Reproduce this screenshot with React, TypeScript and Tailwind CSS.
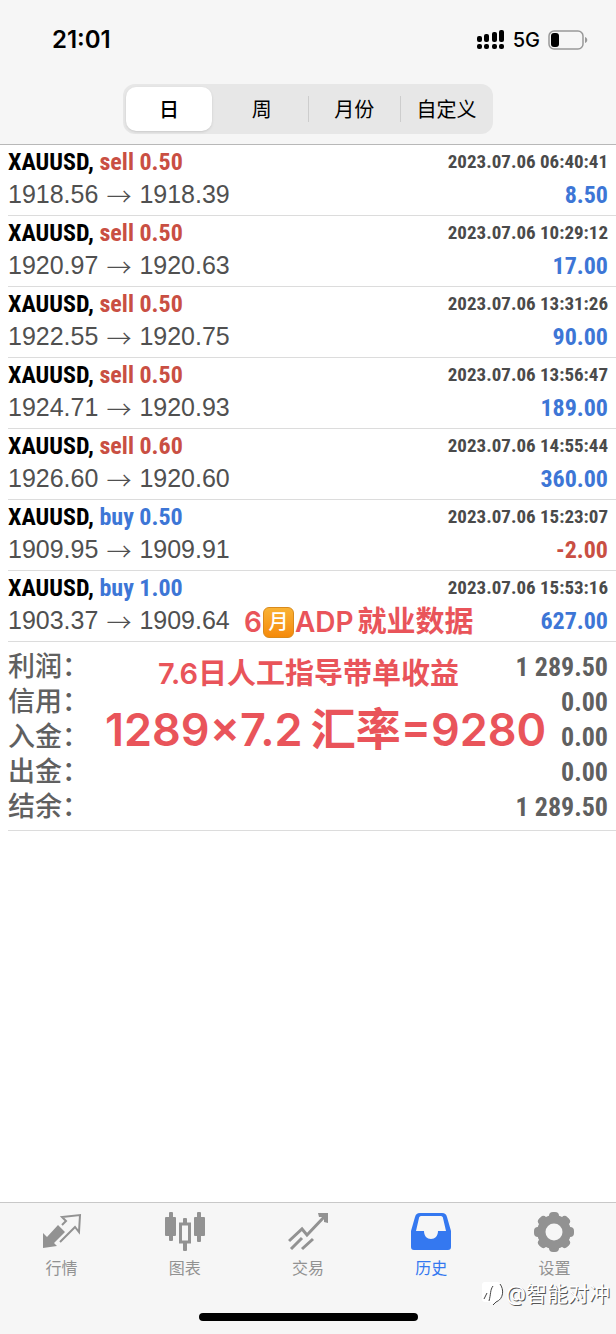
import { useState } from "react";
import clsx from "clsx";

interface Deal {
  side: "sell" | "buy";
  volume: string;
  open: string;
  close: string;
  time: string;
  profit: string;
}

const deals: Deal[] = [
  { side: "sell", volume: "0.50", open: "1918.56", close: "1918.39", time: "2023.07.06 06:40:41", profit: "8.50" },
  { side: "sell", volume: "0.50", open: "1920.97", close: "1920.63", time: "2023.07.06 10:29:12", profit: "17.00" },
  { side: "sell", volume: "0.50", open: "1922.55", close: "1920.75", time: "2023.07.06 13:31:26", profit: "90.00" },
  { side: "sell", volume: "0.50", open: "1924.71", close: "1920.93", time: "2023.07.06 13:56:47", profit: "189.00" },
  { side: "sell", volume: "0.60", open: "1926.60", close: "1920.60", time: "2023.07.06 14:55:44", profit: "360.00" },
  { side: "buy", volume: "0.50", open: "1909.95", close: "1909.91", time: "2023.07.06 15:23:07", profit: "-2.00" },
  { side: "buy", volume: "1.00", open: "1903.37", close: "1909.64", time: "2023.07.06 15:53:16", profit: "627.00" },
];

const summary = [
  { label: "利润", value: "1 289.50" },
  { label: "信用", value: "0.00" },
  { label: "入金", value: "0.00" },
  { label: "出金", value: "0.00" },
  { label: "结余", value: "1 289.50" },
];

const periods = ["日", "周", "月份", "自定义"];

const tabs = [
  { label: "行情", icon: <QuotesIcon /> },
  { label: "图表", icon: <ChartIcon /> },
  { label: "交易", icon: <TradeIcon /> },
  { label: "历史", icon: <HistoryIcon /> },
  { label: "设置", icon: <SettingsIcon /> },
];

function QuotesIcon() {
  return (
    <svg width="40" height="40" viewBox="0 0 40 40" aria-hidden="true">
      <path d="M1 36V21l4 4L16 13l7 7-11 11 3 3z" fill="currentColor" />
      <path
        d="M20 13l4-4-4-4 18-2-1 17-4-5-15 15"
        fill="none"
        stroke="currentColor"
        strokeWidth="2"
      />
    </svg>
  );
}

function ChartIcon() {
  return (
    <svg width="40" height="40" viewBox="0 0 40 40" aria-hidden="true">
      <g fill="currentColor">
        <rect x="4" y="0" width="4" height="29" rx="1" />
        <rect x="0" y="5" width="11" height="19" rx="1" />
        <rect x="32" y="0" width="4" height="30" rx="1" />
        <rect x="29" y="5" width="11" height="19" rx="1" />
        <rect x="18" y="6" width="4" height="6" rx="1" />
        <rect x="18" y="30" width="4" height="9" rx="1" />
      </g>
      <rect x="15.5" y="12" width="9" height="18" fill="none" stroke="currentColor" strokeWidth="3" />
    </svg>
  );
}

function TradeIcon() {
  return (
    <svg width="40" height="40" viewBox="0 0 40 40" aria-hidden="true">
      <g fill="none" stroke="currentColor" strokeWidth="3">
        <path d="M1 29L14 17l5 6L37 4" />
        <path d="M3 37l11-11M14 37l11-10" />
      </g>
      <path d="M30 1h10v10l-4-1V5h-5z" fill="currentColor" />
    </svg>
  );
}

function HistoryIcon() {
  return (
    <svg width="40" height="40" viewBox="0 0 40 40" aria-hidden="true">
      <path
        fillRule="evenodd"
        d="M9 1h22c3 0 4 1 5 4l4 14v16c0 2-1 3-3 3H3c-2 0-3-1-3-3V19L4 5c1-3 2-4 5-4zM10 4c-1 0-2 1-2 2L5 19h8c0 5 3 8 7 8s7-3 7-8h8L32 6c0-1-1-2-2-2z"
        fill="currentColor"
      />
    </svg>
  );
}

function SettingsIcon() {
  return (
    <svg width="40" height="40" viewBox="0 0 40 40" aria-hidden="true">
      <g fill="currentColor">
        <rect x="15" y="0" width="10" height="40" rx="4" />
        <rect x="15" y="0" width="10" height="40" rx="4" transform="rotate(45 20 20)" />
        <rect x="15" y="0" width="10" height="40" rx="4" transform="rotate(90 20 20)" />
        <rect x="15" y="0" width="10" height="40" rx="4" transform="rotate(135 20 20)" />
        <circle cx="20" cy="20" r="17" />
      </g>
      <circle cx="20" cy="20" r="8.5" fill="#f6f6f6" />
    </svg>
  );
}

function StatusBar() {
  return (
    <div className="flex h-20 items-center justify-between pr-7 pl-[52px] text-black">
      <span className="text-2xl font-semibold">21:01</span>
      <div className="flex items-center gap-2">
        <svg width="28" height="20" viewBox="0 0 28 20" aria-hidden="true">
          <rect x="0" y="6" width="5" height="6" rx="2" />
          <rect x="7" y="4" width="5" height="8" rx="2" />
          <rect x="15" y="2" width="5" height="10" rx="2" />
          <rect x="22" y="0" width="5" height="12" rx="2" />
          <rect x="0" y="14" width="5" height="5" rx="2" />
          <rect x="7" y="14" width="5" height="5" rx="2" />
          <rect x="15" y="14" width="5" height="5" rx="2" />
          <rect x="22" y="14" width="5" height="5" rx="2" />
        </svg>
        <span className="text-xl font-medium">5G</span>
        <svg width="40" height="20" viewBox="0 0 40 20" aria-hidden="true">
          <rect x="1" y="1" width="34" height="18" rx="5" fill="none" stroke="#999" strokeWidth="1.5" />
          <rect x="3" y="3" width="8" height="14" rx="3" />
          <path d="M37 7c3 1 3 5 0 6z" fill="#999" />
        </svg>
      </div>
    </div>
  );
}

function DealRow({ deal }: { deal: Deal }) {
  return (
    <li className="flex h-[71px] flex-col border-b border-[#dcdcdc] pr-2">
      <div className="flex h-[34px] items-center justify-between font-['Roboto_Condensed',Roboto,sans-serif] font-bold">
        <span className="text-2xl text-black">
          XAUUSD,{" "}
          <span className={deal.side === "sell" ? "text-[#c94f43]" : "text-[#3d76d6]"}>
            {deal.side} {deal.volume}
          </span>
        </span>
        <time className="text-[19px] text-[#4a4a4a]">{deal.time}</time>
      </div>
      <div className="flex h-8 items-center justify-between">
        <span className="flex items-center gap-2 font-['Liberation_Sans',Arial,sans-serif] text-[25px] text-[#505050]">
          {deal.open}
          <span className="font-['Noto_Sans_CJK_SC',sans-serif] leading-none font-light">→</span>
          {deal.close}
        </span>
        <span
          className={clsx(
            "font-['Roboto_Condensed',Roboto,sans-serif] text-2xl font-bold",
            deal.profit.startsWith("-") ? "text-[#c94f43]" : "text-[#3d76d6]"
          )}
        >
          {deal.profit}
        </span>
      </div>
    </li>
  );
}

// free-floating notes over the list
function Notes() {
  return (
    <div className="font-semibold whitespace-nowrap text-[#e9545a]">
      <p className="absolute -top-10 left-[236px] flex h-10 items-center text-[28px]">
        6
        <span className="mx-px flex size-[31px] items-center justify-center rounded-md border border-[#d98a1c] bg-linear-to-b from-[#f9b233] to-[#f58a07] text-xl font-medium text-white">
          月
        </span>
        <span className="mr-1">ADP</span>
        <span className="text-[29px]">就业数据</span>
      </p>
      <p className="absolute top-3 left-[150px] flex h-10 items-center text-[29px]">7.6日人工指导带单收益</p>
      <p className="absolute top-14 left-[97px] flex h-16 items-center gap-2 text-[45px]">
        <span>1289×7.2</span>
        <span>汇率=9280</span>
      </p>
    </div>
  );
}

function Watermark() {
  return (
    <div className="absolute right-1.5 bottom-6 flex items-center gap-0.5 text-white">
      <svg width="22" height="26" viewBox="0 0 22 26" aria-hidden="true">
        <path d="M3 1h12c4 0 6 4 6 9 0 7-4 11-9 12l-4 2 1-3H3c-2 0-3-1-3-3V4c0-2 1-3 3-3z" fill="#fff" />
        <path
          d="M18 3c4 5 4 15-4 18l-3 3M11 5C8 9 9 13 7 20M5 12l-3 6"
          fill="none"
          stroke="#444"
          strokeWidth="1"
        />
      </svg>
      <span className="text-[21px] leading-8 [text-shadow:1px_1px_0_#555]">@智能对冲</span>
    </div>
  );
}

export default function App() {
  const [period, setPeriod] = useState("日");
  const [tab, setTab] = useState("历史");

  return (
    <div className="relative flex min-h-screen flex-col bg-white font-[Inter,'Noto_Sans_CJK_SC',sans-serif]">
      <header className="border-b border-[#b8b8b8] bg-[#f6f6f6] pb-[10px]">
        <StatusBar />
        <div className="mx-auto mt-1 grid h-[50px] w-3/5 grid-cols-4 rounded-xl bg-[#e7e7e7]">
          {periods.map((name, i) => (
            <button
              key={name}
              type="button"
              onClick={() => setPeriod(name)}
              className={clsx(
                "relative pt-0.5 text-xl text-black",
                period === name && "my-[3px] mr-1 ml-[3px] rounded-[10px] bg-white font-medium shadow",
                i > 1 && "before:absolute before:inset-y-3 before:left-0 before:w-px before:bg-[#cdcdcd]"
              )}
            >
              {name}
            </button>
          ))}
        </div>
      </header>

      <main className="flex-1 pl-2">
        <ul>
          {deals.map((deal) => (
            <DealRow key={deal.time} deal={deal} />
          ))}
        </ul>
        <div className="relative border-b border-[#dcdcdc] pt-2 pb-[5px]">
          <dl>
            {summary.map((item) => (
              <div key={item.label} className="flex h-[35px] items-center justify-between pr-2 text-[#606060]">
                <dt className="text-[27px] font-medium">{item.label}：</dt>
                <dd className="font-['Roboto_Condensed',Roboto,sans-serif] text-[26px] font-bold">{item.value}</dd>
              </div>
            ))}
          </dl>
          <Notes />
        </div>
      </main>

      <nav className="border-t border-[#c8c8c8] bg-[#f6f6f6] pt-[9px] pb-[13px]">
        <div className="flex">
          {tabs.map((item) => (
            <button
              key={item.label}
              type="button"
              onClick={() => setTab(item.label)}
              className={clsx(
                "flex flex-1 flex-col items-center gap-1",
                tab === item.label ? "text-[#3478f0]" : "text-[#929292]"
              )}
            >
              {item.icon}
              <span className="text-base leading-6">{item.label}</span>
            </button>
          ))}
        </div>
        <div className="mx-auto mt-[33px] h-2 w-[219px] rounded-full bg-black" />
      </nav>
      <Watermark />
    </div>
  );
}
